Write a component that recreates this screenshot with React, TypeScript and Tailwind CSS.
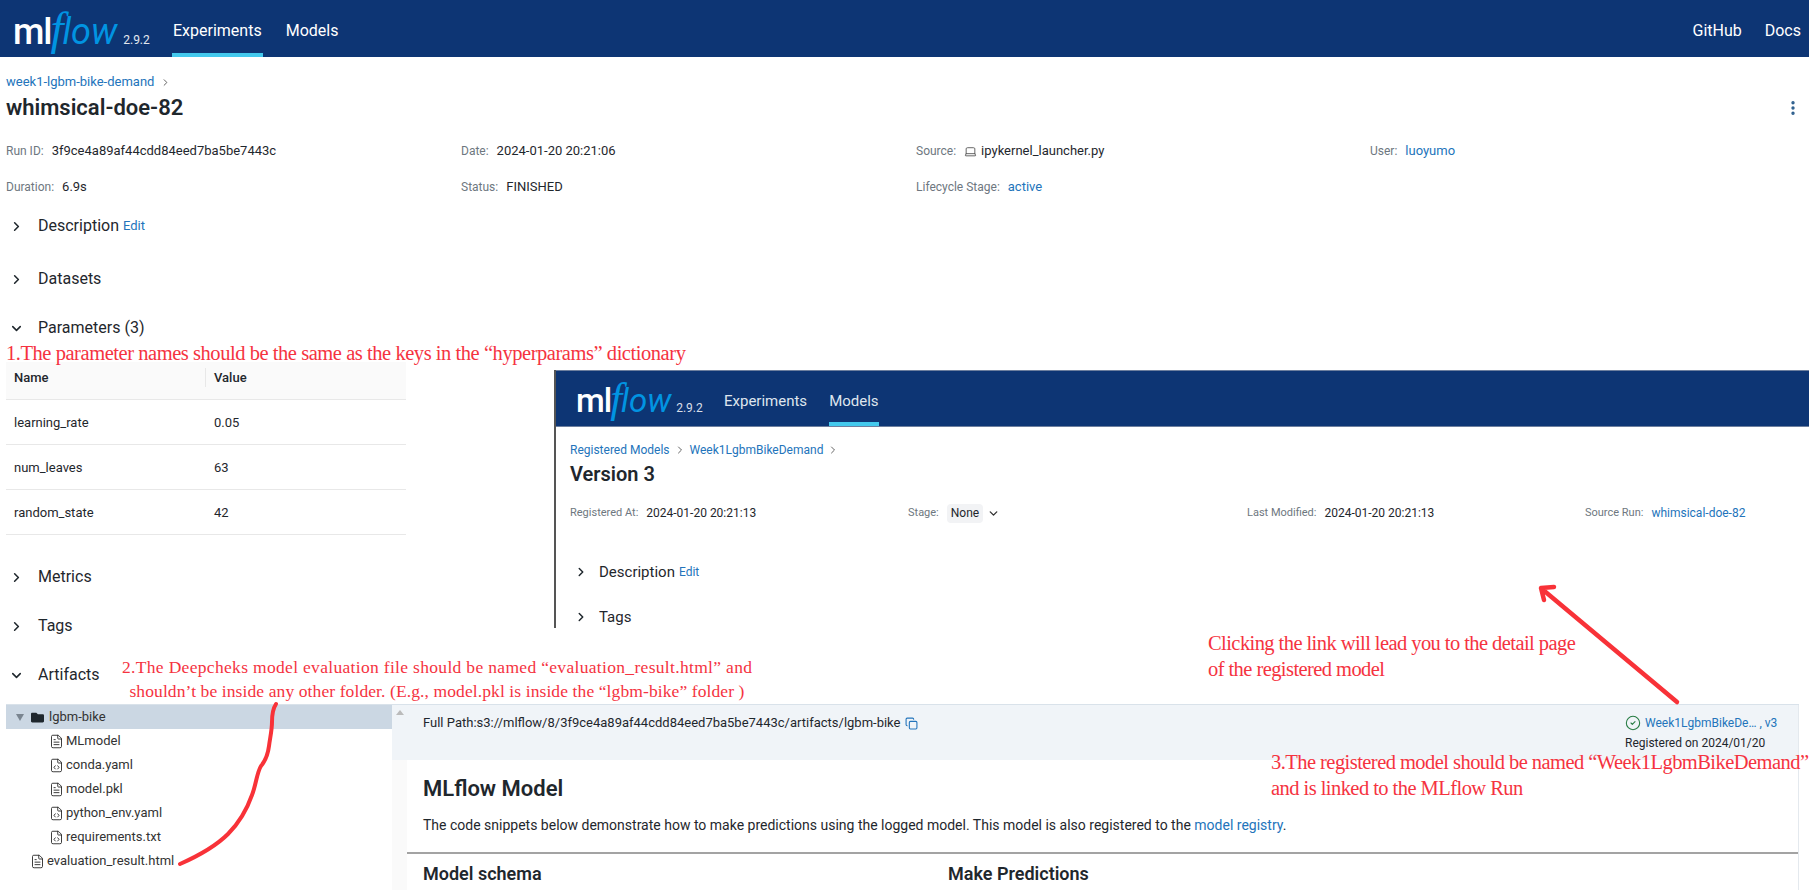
import { ChevronDown, ChevronRight, CircleCheck, Copy, EllipsisVertical, FileCode, FileText, Laptop } from "lucide-react";
import { FaFolder } from "react-icons/fa";

const LINK = "text-[#2374bb]";
const RED = "absolute whitespace-nowrap font-['Liberation_Serif',serif] text-[#f5333f]";

function Logo({ small }: { small?: boolean }) {
  return (
    <div className={small ? "flex items-baseline w-[125px] text-[33px] leading-none" : "flex items-baseline w-[136px] text-[36px] leading-none"}>
      <span className="font-medium text-white tracking-[-1px]">ml</span>
      <span className="font-['Liberation_Serif',serif] italic text-[#0194e2] text-[1.3em] leading-none -mx-[1px]">f</span>
      <span className="italic font-normal text-[#0194e2]">low</span>
      <span className={small ? "ml-[5px] text-[12px] text-[#d9dfe8]" : "ml-[6px] text-[12px] text-[#e4e8ef]"}>2.9.2</span>
    </div>
  );
}

function Meta({ label, small, children }: { label: string; small?: boolean; children: React.ReactNode }) {
  return (
    <div className={small ? "flex items-center h-5 text-[12px] whitespace-nowrap" : "flex items-center h-5 text-[13px] whitespace-nowrap"}>
      <span className={small ? "text-[11px] text-[#6e7780] mr-2" : "text-[12px] text-[#6e7780] mr-2"}>{label}</span>
      {children}
    </div>
  );
}

function Section({ title, open, className, edit }: { title: string; open?: boolean; className: string; edit?: boolean }) {
  return (
    <div className={"flex items-center h-8 pl-[9px] text-[16px] text-[#1f272d] " + className}>
      {open ? <ChevronDown size={15} strokeWidth={2.5} /> : <ChevronRight size={15} strokeWidth={2.5} />}
      <span className="ml-[14px]">{title}</span>
      {edit && <span className={"ml-1 text-[13px] " + LINK}>Edit</span>}
    </div>
  );
}

function ParamRow({ name, value }: { name: string; value: string }) {
  return (
    <div className="flex items-center h-[45px] pt-[2px] border-b border-[#e8e8e8] text-[13px] text-[#1f272d]">
      <span className="w-[208px] pl-2">{name}</span>
      <span>{value}</span>
    </div>
  );
}

function TreeFile({ name, code }: { name: string; code?: boolean }) {
  return (
    <div className="flex items-center h-6 pl-[43px] text-[13px] text-[#333]">
      {code ? <FileCode size={15} strokeWidth={1.4} className="text-[#222]" /> : <FileText size={15} strokeWidth={1.4} className="text-[#222]" />}
      <span className="ml-[2px]">{name}</span>
    </div>
  );
}

function EmbeddedShot() {
  return (
    <div className="absolute left-[554px] top-[370px] w-[1255px] h-[258px] bg-white border-l-2 border-[#555] font-['Roboto',sans-serif]">
      <div className="flex items-center h-[57px] bg-[#0d3574] border-y border-[#6d7f9e] pl-5">
        <Logo small />
        <div className="flex h-full ml-[23px] text-[15px] text-[#dfe5ee]">
          <span className="flex items-center h-full pt-[9px] border-b-4 border-transparent">Experiments</span>
          <span className="flex items-center h-full pt-[9px] ml-[22px] border-b-4 border-[#43c9ed]">Models</span>
        </div>
      </div>
      <div className="pl-[14px]">
        <div className="flex items-center h-5 mt-[13px] text-[12px]">
          <span className={LINK}>Registered Models</span>
          <ChevronRight size={12} className="mx-1 text-[#666]" />
          <span className={LINK}>Week1LgbmBikeDemand</span>
          <ChevronRight size={12} className="ml-1 text-[#666]" />
        </div>
        <div className="h-7 text-[20px] leading-7 font-semibold text-[#1f272d]">Version 3</div>
        <div className="grid grid-cols-[338px_339px_338px_1fr] mt-[15px]">
          <Meta small label="Registered At:"><span className="text-[#1f272d]">2024-01-20 20:21:13</span></Meta>
          <Meta small label="Stage:">
            <span className="bg-[#f2f3f5] rounded px-1 h-[19px] leading-[19px] text-[#1f272d]">None</span>
            <ChevronDown size={13} strokeWidth={2.5} className="ml-1 text-[#333]" />
          </Meta>
          <Meta small label="Last Modified:"><span className="text-[#1f272d]">2024-01-20 20:21:13</span></Meta>
          <Meta small label="Source Run:"><span className={LINK}>whimsical-doe-82</span></Meta>
        </div>
      </div>
      <div className="flex items-center h-6 mt-[37px] pl-[18px] text-[15px] text-[#1f272d]">
        <ChevronRight size={14} strokeWidth={2.5} />
        <span className="ml-[11px]">Description</span>
        <span className={"ml-1 text-[12px] " + LINK}>Edit</span>
      </div>
      <div className="flex items-center h-6 mt-[21px] pl-[18px] text-[15px] text-[#1f272d]">
        <ChevronRight size={14} strokeWidth={2.5} />
        <span className="ml-[11px]">Tags</span>
      </div>
    </div>
  );
}

export default function App() {
  return (
    <div className="relative w-[1809px] h-[890px] overflow-hidden bg-white text-[#1f272d] font-['Roboto',sans-serif]">
      <header className="flex items-center h-[57px] bg-[#0d3574] pl-[13px] pr-2 text-white">
        <Logo />
        <nav className="flex h-full ml-[23px] text-[16px]">
          <span className="flex items-center h-full px-px pt-2 border-b-4 border-[#43c9ed]">Experiments</span>
          <span className="flex items-center h-full pt-2 ml-[23px] border-b-4 border-transparent">Models</span>
        </nav>
        <div className="flex ml-auto pt-[5px] gap-[23px] text-[16px]">
          <span>GitHub</span>
          <span>Docs</span>
        </div>
      </header>

      <div className="px-[6px]">
        <div className="flex items-center h-5 mt-[15px] text-[13px]">
          <span className={LINK}>week1-lgbm-bike-demand</span>
          <ChevronRight size={11} className="ml-[6px] text-[#555]" />
        </div>
        <div className="flex items-center justify-between h-8">
          <h1 className="text-[22px] font-semibold leading-8">whimsical-doe-82</h1>
          <EllipsisVertical size={18} strokeWidth={2.5} className="mr-[1px] text-[#2b5d8c]" />
        </div>
        <div className="grid grid-cols-[455px_455px_454px_1fr] gap-y-4 mt-[17px]">
          <Meta label="Run ID:">3f9ce4a89af44cdd84eed7ba5be7443c</Meta>
          <Meta label="Date:">2024-01-20 20:21:06</Meta>
          <Meta label="Source:">
            <Laptop size={13} strokeWidth={1.5} className="mr-1 text-[#444]" />
            ipykernel_launcher.py
          </Meta>
          <Meta label="User:"><span className={LINK}>luoyumo</span></Meta>
          <Meta label="Duration:">6.9s</Meta>
          <Meta label="Status:">FINISHED</Meta>
          <Meta label="Lifecycle Stage:"><span className={LINK}>active</span></Meta>
        </div>
      </div>

      <Section title="Description" edit className="mt-[13px]" />
      <Section title="Datasets" className="mt-[21px]" />
      <Section title="Parameters (3)" open className="mt-[17px]" />

      <div className="w-[400px] ml-[6px] mt-[18px]">
        <div className="flex items-center h-[38px] pb-[6px] bg-[#fafafa] border-b border-[#e8e8e8] text-[13px] font-medium">
          <span className="w-[200px] pl-2 border-r border-[#e8e8e8]">Name</span>
          <span className="pl-2">Value</span>
        </div>
        <ParamRow name="learning_rate" value="0.05" />
        <ParamRow name="num_leaves" value="63" />
        <ParamRow name="random_state" value="42" />
      </div>

      <Section title="Metrics" className="mt-[26px]" />
      <Section title="Tags" className="mt-[17px]" />
      <Section title="Artifacts" open className="mt-[17px]" />

      <div className="flex h-[186px] ml-[6px] mr-[10px] mt-[13px] border-t border-[#d9e2ea]">
        <div className="w-[386px] shrink-0">
          <div className="flex items-center h-6 pl-[10px] bg-[#cbd7e3] text-[13px] text-[#333]">
            <span className="w-0 h-0 border-x-[4px] border-x-transparent border-t-[7px] border-t-[#7a8590]" />
            <FaFolder size={13} className="ml-[7px] text-[#1f272d]" />
            <span className="ml-[5px]">lgbm-bike</span>
          </div>
          <TreeFile name="MLmodel" />
          <TreeFile name="conda.yaml" code />
          <TreeFile name="model.pkl" />
          <TreeFile name="python_env.yaml" code />
          <TreeFile name="requirements.txt" code />
          <div className="flex items-center h-6 pl-[24px] text-[13px] text-[#333]">
            <FileText size={15} strokeWidth={1.4} className="text-[#222]" />
            <span className="ml-[2px]">evaluation_result.html</span>
          </div>
        </div>
        <div className="flex flex-col grow border-r border-[#e4e9ee]">
          <div className="flex flex-col h-[55px] pl-[15px] bg-[#f0f4f8]">
            <div className="flex justify-between pl-4 pr-[20px] pt-2">
              <div className="flex items-center h-5 text-[13px]">
                Full Path:s3://mlflow/8/3f9ce4a89af44cdd84eed7ba5be7443c/artifacts/lgbm-bike
                <Copy size={13} className={"ml-[5px] " + LINK} />
              </div>
              <div className="text-[12px] leading-5 w-[153px] whitespace-nowrap">
                <div className="flex items-center">
                  <CircleCheck size={16} strokeWidth={1.6} className="mr-1 text-[#277c43]" />
                  <span className={LINK}>Week1LgbmBikeDe… , v3</span>
                </div>
                <div>Registered on 2024/01/20</div>
              </div>
            </div>
          </div>
          <div className="flex grow">
            <div className="w-[15px] shrink-0 bg-[#fafafa]" />
            <div className="grow">
              <h2 className="pl-4 mt-[14px] h-[30px] text-[22px] leading-[30px] font-semibold">MLflow Model</h2>
              <p className="pl-4 mt-[11px] h-5 text-[14px] leading-5">
                The code snippets below demonstrate how to make predictions using the logged model. This model is also registered to the <span className={LINK}>model registry</span>.
              </p>
              <div className="flex mt-[17px] pl-4 pt-[8px] border-t-2 border-[#a3a3a3] text-[18px] leading-6 font-semibold">
                <span className="w-[525px]">Model schema</span>
                <span>Make Predictions</span>
              </div>
            </div>
          </div>
        </div>
      </div>

      <span className="absolute left-[396px] top-[710px] w-0 h-0 border-x-[4px] border-x-transparent border-b-[5px] border-b-[#bbb]" />

      <EmbeddedShot />

      <div className={RED + " left-[6px] top-[341px] text-[20.5px] leading-6 tracking-[-0.45px]"}>
        1.The parameter names should be the same as the keys in the “hyperparams” dictionary
      </div>
      <div className={RED + " left-[122px] top-[655px] w-[630px] text-[17.5px] leading-6 text-center"}>
        <div className="tracking-[0.32px]">2.The Deepcheks model evaluation file should be named “evaluation_result.html” and</div>
        <div className="tracking-[0.1px]">shouldn’t be inside any other folder. (E.g., model.pkl is inside the “lgbm-bike” folder )</div>
      </div>
      <div className={RED + " left-[1208px] top-[630px] text-[20.5px] leading-[26px] tracking-[-0.57px]"}>
        <div>Clicking the link will lead you to the detail page</div>
        <div>of the registered model</div>
      </div>
      <div className={RED + " left-[1271px] top-[749px] text-[20.5px] leading-[26px] tracking-[-0.55px]"}>
        <div>3.The registered model should be named “Week1LgbmBikeDemand”</div>
        <div>and is linked to the MLflow Run</div>
      </div>

      <svg className="absolute left-0 top-0 pointer-events-none" width="1809" height="890" fill="none" stroke="#f83238" strokeLinecap="round" strokeLinejoin="round">
        <path strokeWidth="4" d="M276 704 C272 710 272 716 272 722 C272 730 270 738 269 746 C268 754 266 760 261 766 C257 772 256 785 252 795 C246 812 238 824 228 834 C216 846 198 856 180 864" />
        <path strokeWidth="4.5" d="M1677 702 L1542 589 M1541 588 L1554 587 M1541 588 L1544 600" />
      </svg>
    </div>
  );
}
